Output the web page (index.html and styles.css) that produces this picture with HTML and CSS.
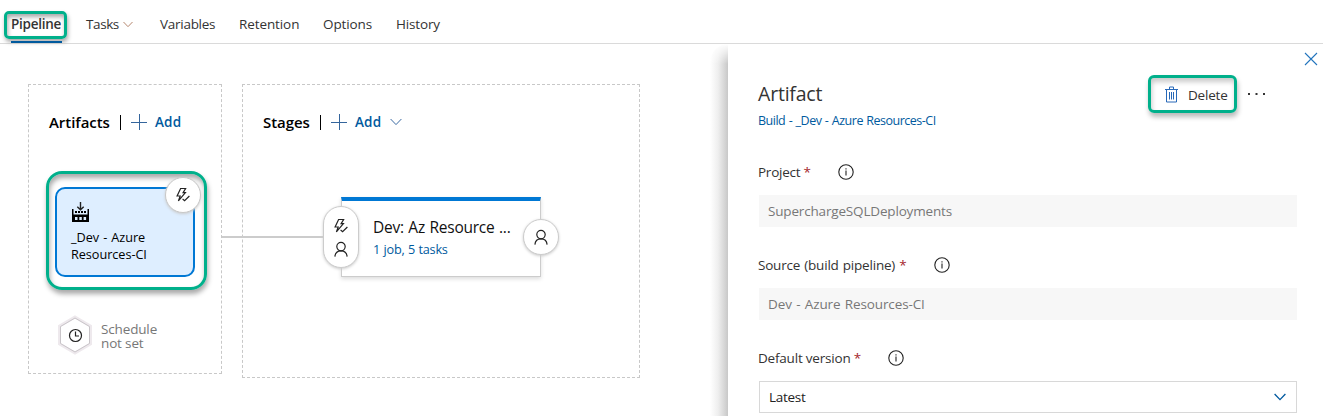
FILE: index.html
```html
<!DOCTYPE html>
<html lang="en">
<head>
<meta charset="utf-8">
<title>Release pipeline</title>
<link rel="stylesheet" href="styles.css">
</head>
<body>
<svg class="defs" aria-hidden="true">
  <symbol id="person" viewBox="0 0 16 16"><circle cx="8" cy="5.600" r="4.200"/><path d="M1.900 15.600C2.200 12 4.800 9.800 8 9.800s5.800 2.200 6.100 5.800"/></symbol>
  <symbol id="bolt" viewBox="0 0 16 16"><path d="M5.600 1.500H10.600L8.100 5.600H10.400L3.400 13.900L5.200 9H2.100Z"/><path d="M7.600 12L9.600 13.700L14.400 9"/></symbol>
  <symbol id="chevron" viewBox="0 0 12 8"><path d="M.6 1L6 6.600L11.400 1"/></symbol>
  <symbol id="plus" viewBox="0 0 16 16"><path d="M8.500 0V16M0 8.500H16"/></symbol>
  <symbol id="info" viewBox="0 0 16 16"><circle cx="8" cy="8" r="7.200"/><path d="M8 6.600V11.600M8 4.300V5.500"/></symbol>
</svg>
<header class="tabs">
  <a class="tab tab-active">Pipeline</a>
  <a class="tab tab-tasks">Tasks <svg class="tab-chevron"><use href="#chevron"/></svg></a>
  <a class="tab tab-variables">Variables</a>
  <a class="tab tab-retention">Retention</a>
  <a class="tab tab-options">Options</a>
  <a class="tab tab-history">History</a>
</header>
<main class="workspace">
  <section class="canvas">
    <div class="group artifacts">
      <div class="group-head"><h2 class="artifacts-title">Artifacts</h2><span class="bar"></span><svg class="plus"><use href="#plus"/></svg><span class="add">Add</span></div>
      <div class="highlight">
        <div class="artifact-card">
          <svg class="build-icon" viewBox="0 0 20 20"><path class="build-arrow" d="M9.500 0V7.500M6.300 4.700L9.500 7.800L12.700 4.700"/><path class="build-body" fill-rule="evenodd" d="M1 7H2.500V12.500H16.500V7H18V20H1ZM4 15V18H6.500V15ZM8.300 15V18H10.800V15ZM12.600 15V18H15.100V15ZM4 9H6V11H4ZM7 9H9V11H7ZM10 9H12V11H10ZM13 9H15V11H13Z"/></svg>
          <div class="artifact-name">_Dev - Azure<br>Resources-CI</div>
        </div>
        <span class="trigger"><svg><use href="#bolt"/></svg></span>
      </div>
      <div class="schedule">
        <svg class="hexagon" viewBox="0 0 34 40"><path class="hex-shadow" d="M17 2L32.500 11V29L17 38L1.500 29V11Z"/><path class="hex-edge" d="M17 3L31.500 11.500V28.500L17 37L2.500 28.500V11.500Z"/><circle cx="17.500" cy="20.500" r="6"/><path class="hands" d="M17.500 16.500V21H21"/></svg>
        <div class="schedule-text">Schedule<br>not set</div>
      </div>
    </div>
    <div class="group stages">
      <div class="group-head"><h2 class="stages-title">Stages</h2><span class="bar"></span><svg class="plus"><use href="#plus"/></svg><span class="add">Add</span><svg class="add-chevron"><use href="#chevron"/></svg></div>
      <div class="stage-card">
        <div class="stage-name">Dev: Az Resource ...</div>
        <div class="stage-tasks">1 job, 5 tasks</div>
        <span class="pre"><svg><use href="#bolt"/></svg><svg><use href="#person"/></svg></span>
        <span class="post"><svg><use href="#person"/></svg></span>
      </div>
    </div>
    <span class="connector"></span>
  </section>
  <aside class="panel">
    <svg class="close" viewBox="0 0 14 14"><path d="M1 1L13 13M13 1L1 13"/></svg>
    <div class="panel-head">
      <div class="heading"><h1>Artifact</h1><a class="subtitle">Build - _Dev - Azure Resources-CI</a></div>
      <button class="delete"><svg viewBox="0 0 14 17"><path d="M0 3.500H13M4.500 3.500V1H8.500V3.500M1.500 3.500V16H11.500V3.500M4.500 6V13.500M6.500 6V13.500M8.500 6V13.500"/></svg><span>Delete</span></button>
      <svg class="more" viewBox="0 0 18 4"><path d="M0 1H2V3H0ZM7.500 1H9.500V3H7.500ZM15 1H17V3H15Z"/></svg>
    </div>
    <div class="field">
      <div class="label"><span class="label-project">Project <b>*</b></span><svg class="info"><use href="#info"/></svg></div>
      <div class="input"><span class="value-project">SuperchargeSQLDeployments</span></div>
    </div>
    <div class="field">
      <div class="label"><span class="label-source">Source (build pipeline) <b>*</b></span><svg class="info"><use href="#info"/></svg></div>
      <div class="input"><span class="value-source">Dev - Azure Resources-CI</span></div>
    </div>
    <div class="field">
      <div class="label"><span class="label-version">Default version <b>*</b></span><svg class="info"><use href="#info"/></svg></div>
      <div class="input select"><span>Latest</span><svg class="select-chevron"><use href="#chevron"/></svg></div>
    </div>
  </aside>
</main>
</body>
</html>
```
FILE: styles.css
```css
* { box-sizing: border-box; }
body { margin: 0; height: 416px; overflow: hidden; background: #fff; color: #333; font: 13.5px/20px "Open Sans", "Noto Sans", sans-serif; letter-spacing: -.27px; white-space: nowrap; }
svg { display: block; flex: none; fill: none; stroke: #222; stroke-width: 1.2; }
h1, h2 { margin: 0; font-weight: 400; }
.defs { position: absolute; width: 0; height: 0; }

.tabs { display: flex; height: 44px; padding: 11px 0 0 4px; border-bottom: 1px solid #dadada; }
.tab { height: 26px; line-height: 26px; flex: none; }
.tab-active { position: relative; width: 63px; height: 28px; margin-right: 19px; padding-left: 4px; line-height: 20px; border: 3px solid #00b08b; border-radius: 5px; font-weight: 600; letter-spacing: -.25px; box-shadow: 1px 3px 4px #aaa, inset 1px 3px 4px #aaa; }
.tab-active::after { content: ""; position: absolute; left: 4px; top: 27px; width: 51px; height: 2px; background: #005a9e; }
.tab-tasks { display: flex; align-items: center; width: 74px; gap: 4px; letter-spacing: -.4px; }
.tab-chevron { width: 10px; height: 7px; stroke: #b5876f; stroke-width: 1.2; }
.tab-variables { width: 79px; }
.tab-retention { width: 84px; letter-spacing: -.1px; }
.tab-options { width: 73px; letter-spacing: -.1px; }
.tab-history { letter-spacing: -.15px; }

.workspace { display: flex; height: 372px; }
.canvas { position: relative; display: flex; align-items: flex-start; gap: 20px; width: 728px; flex: none; padding: 40px 0 0 28px; }
.group { border: 1px dashed #c8c8c8; flex: none; }
.artifacts { width: 194px; height: 290px; }
.stages { width: 398px; height: 294px; }
.group-head { display: flex; align-items: center; height: 20px; margin: 27px 0 0 20px; }
.group-head h2 { font-size: 15px; font-weight: 600; color: #000; letter-spacing: -.05px; }
.artifacts-title { width: 71px; }
.stages-title { width: 57px; }
.bar { width: 1px; height: 15px; margin-right: 11px; background: #000; }
.plus { width: 16px; height: 16px; stroke: #34659c; stroke-width: 1; margin: 0 8px 0 -1px; }
.add { width: 28px; color: #005a9e; font-weight: 600; letter-spacing: .15px; }
.add-chevron { width: 12px; height: 8px; margin-left: 7px; stroke: #3b6ba3; stroke-width: 1; }

.highlight { position: relative; width: 161px; height: 119px; margin: 39px 0 0 17px; padding: 13px 0 0 6px; border: 3px solid #00b08b; border-radius: 16px; box-shadow: 1px 4px 5px #aaa, inset 1px 4px 5px #aaa; }
.artifact-card { width: 140px; height: 90px; padding: 13px 0 0 14px; border: 2px solid #0078d4; border-radius: 10px; background: #deeeff; color: #000; }
.build-icon { width: 20px; height: 20px; stroke: none; }
.build-icon .build-arrow { stroke: #222; stroke-width: 1.4; }
.build-body { fill: #000; }
.artifact-name { margin-top: 7px; font-size: 12.7px; line-height: 17px; font-weight: 500; letter-spacing: -.05px; word-spacing: .9px; }
.trigger { position: absolute; left: 116px; top: 3px; display: grid; place-items: center; width: 36px; height: 36px; border: 1px solid #c8c8c8; border-radius: 50%; background: #fff; box-shadow: 0 1px 3px #ccc; }
.trigger svg, .pre svg, .post svg { width: 16px; height: 16px; }
.schedule { display: flex; align-items: center; gap: 9px; margin: 25px 0 0 29px; }
.hexagon { width: 34px; height: 40px; }
.hex-shadow { stroke: #eee9ed; stroke-width: 3; }
.hex-edge { stroke: #c9c5c9; stroke-width: 1; }
.schedule-text { padding-top: 2px; color: #777; line-height: 14px; font-size: 13.5px; letter-spacing: -.15px; }

.stage-card { position: relative; width: 200px; height: 80px; margin: 65px 0 0 98px; padding: 16px 0 0 31px; border: 1px solid #ccc; border-top: 4px solid #0078d4; box-shadow: 0 2px 4px #ddd; background: #fff; }
.stage-name { color: #111; font-size: 15.5px; line-height: 20px; letter-spacing: -.25px; word-spacing: .8px; }
.stage-tasks { margin-top: 2px; color: #005a9e; font-size: 12.7px; letter-spacing: -.2px; word-spacing: .3px; }
.pre, .post { position: absolute; display: grid; place-content: center; border: 1px solid #ccc; border-radius: 18px; background: #fff; box-shadow: 0 1px 3px #ccc; }
.pre { left: -19px; top: 5px; width: 36px; height: 62px; gap: 7px; }
.post { left: 181px; top: 18px; width: 36px; height: 36px; }
.connector { position: absolute; left: 222px; top: 192px; width: 101px; height: 2px; background: #ccc; }

.panel { position: relative; flex: 1; padding: 8px 26px 0 30px; background: #fff; }
.panel::before { content: ""; position: absolute; left: -18px; top: 0; width: 18px; height: 372px; border-top-left-radius: 18px; background: linear-gradient(90deg, #fff, #eee 45%, #c8c8c8); -webkit-mask-image: linear-gradient(transparent, #000 20px); mask-image: linear-gradient(transparent, #000 20px); }
.close { width: 14px; height: 14px; margin: 0 -21px 0 auto; stroke: #2374bd; stroke-width: 1.1; }
.panel-head { display: flex; height: 66px; margin-top: 9px; }
.heading { width: 390px; padding-top: 7px; }
h1 { font-size: 19.5px; line-height: 24px; letter-spacing: -.2px; }
.subtitle { display: block; margin-top: 6px; font-size: 12.5px; line-height: 18px; color: #005a9e; letter-spacing: -.5px; word-spacing: .7px; }
.delete { display: flex; align-items: center; gap: 9px; width: 89px; height: 38px; padding: 1px 0 0 14px; border: 3px solid #00b08b; border-radius: 6px; background: none; color: #333; font: inherit; letter-spacing: -.2px; box-shadow: 1px 4px 5px #bbb, inset 1px 4px 5px #ccc; }
.delete svg { width: 14px; height: 17px; margin-top: -1px; stroke: #2869b8; stroke-width: 1; }
.more { width: 18px; height: 4px; margin: 17px 0 0 11px; stroke: none; fill: #333; }
.field { height: 93px; padding-top: 21px; }
.label { display: flex; align-items: center; height: 20px; letter-spacing: -.25px; }
.label b { color: #a4262c; font-weight: 400; }
.label-project { width: 80px; }
.label-version { width: 130px; letter-spacing: -.2px; }
.label-source { width: 176px; letter-spacing: -.2px; word-spacing: .8px; }
.info { width: 16px; height: 16px; stroke-width: 1.1; }
.input { display: flex; align-items: center; height: 32px; margin: 13px 0 0 1px; padding-left: 9px; background: #f7f7f7; color: #777; }
.value-project { letter-spacing: -.17px; }
.value-source { letter-spacing: -.12px; word-spacing: 1px; }
.select { justify-content: space-between; padding-right: 10px; border: 1px solid #d8d8d8; background: #fff; color: #222; }
.select-chevron { width: 12px; height: 8px; stroke: #00599f; stroke-width: 1.3; }
```
